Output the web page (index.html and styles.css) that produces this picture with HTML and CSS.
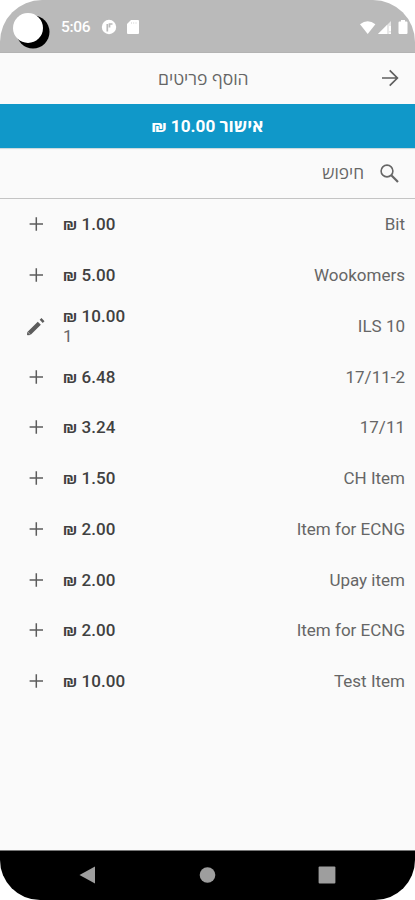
FILE: index.html
```html
<!DOCTYPE html>
<html lang="he">
<head>
<meta charset="utf-8">
<title>הוסף פריטים</title>
<link rel="stylesheet" href="styles.css">
</head>
<body>
<div class="phone">
  <header class="status">
    <svg class="camera" viewBox="0 0 38 38"><circle cx="21" cy="20" r="16.5" fill="#000"/><circle cx="16" cy="16" r="15" fill="#fff"/></svg>
    <span class="clock">5:06</span>
    <svg class="app-dot" viewBox="0 0 16 16"><circle cx="8" cy="8" r="7.2" fill="#fff"/><path d="M6.300 12.500V5M8.500 8.500V5h3" fill="none" stroke="#bababa" stroke-width="1.700"/></svg>
    <svg class="card" viewBox="0 0 12 14"><path d="M4 0h7q1 0 1 1v12q0 1-1 1H1q-1 0-1-1V4z" fill="#fff"/><path d="M4.500 2v2M6.700 2v2M9 2v2" stroke="#e6e6e6"/></svg>
    <svg class="signals" viewBox="0 0 48 16"><path d="M0 4.200Q7.700-1.800 15.400 4.200L7.700 14z" fill="#fff"/><path d="M31 1v13H18z" fill="#fff" fill-opacity=".65"/><path d="M27 5v9h-9zM29 6h2v5h-2zM29 12.500h2V14h-2z" fill="#fff"/><path d="M41 0h4v1.500h1.500q1 0 1 1V13q0 1-1 1h-7q-1 0-1-1V2.500q0-1 1-1H41z" fill="#fff"/></svg>
  </header>
  <nav class="toolbar">
    <span class="title" dir="rtl">הוסף פריטים</span>
    <svg class="arrow" viewBox="0 0 18 18"><path d="M1 9h15M8.700 1.300L16.400 9l-7.700 7.700" fill="none" stroke="#5f5f5f" stroke-width="1.700"/></svg>
  </nav>
  <div class="confirm" dir="rtl">אישור 10.00 ₪</div>
  <div class="search">
    <span class="hint" dir="rtl">חיפוש</span>
    <svg class="lens" viewBox="0 0 19 19"><circle cx="7" cy="7" r="5.900" fill="none" stroke="#666" stroke-width="1.600"/><path d="M11.300 11.300L18 18" stroke="#666" stroke-width="2.200"/></svg>
  </div>
  <svg class="defs"><symbol id="plus" viewBox="0 0 24 24"><path d="M12.300 5.300v13.400M5.600 12h13.400" stroke="#5c5c5c" stroke-width="1.500"/></symbol><symbol id="pencil" viewBox="0 0 24 24"><path d="M5.200 19.200L15.300 9.300M17.200 7.400L19 5.700" fill="none" stroke="#5c5c5c" stroke-width="4.400"/><path d="M3.300 17.800l3.200 3.200-2.700.3q-.8 0-.8-.8z" fill="#5c5c5c"/></symbol></svg>
  <main class="items">
    <div class="row"><svg class="icon"><use href="#plus"/></svg><div class="price"><b><i>₪</i> 1.00</b></div><span class="name">Bit</span></div>
    <div class="row"><svg class="icon"><use href="#plus"/></svg><div class="price"><b><i>₪</i> 5.00</b></div><span class="name">Wookomers</span></div>
    <div class="row"><svg class="icon"><use href="#pencil"/></svg><div class="price"><b><i>₪</i> 10.00</b><small>1</small></div><span class="name">ILS 10</span></div>
    <div class="row"><svg class="icon"><use href="#plus"/></svg><div class="price"><b><i>₪</i> 6.48</b></div><span class="name">17/11-2</span></div>
    <div class="row"><svg class="icon"><use href="#plus"/></svg><div class="price"><b><i>₪</i> 3.24</b></div><span class="name">17/11</span></div>
    <div class="row"><svg class="icon"><use href="#plus"/></svg><div class="price"><b><i>₪</i> 1.50</b></div><span class="name">CH Item</span></div>
    <div class="row"><svg class="icon"><use href="#plus"/></svg><div class="price"><b><i>₪</i> 2.00</b></div><span class="name">Item for ECNG</span></div>
    <div class="row"><svg class="icon"><use href="#plus"/></svg><div class="price"><b><i>₪</i> 2.00</b></div><span class="name">Upay item</span></div>
    <div class="row"><svg class="icon"><use href="#plus"/></svg><div class="price"><b><i>₪</i> 2.00</b></div><span class="name">Item for ECNG</span></div>
    <div class="row"><svg class="icon"><use href="#plus"/></svg><div class="price"><b><i>₪</i> 10.00</b></div><span class="name">Test Item</span></div>
  </main>
  <footer class="navbar">
    <svg viewBox="0 0 18 18"><path d="M1.500 9L17 .4v17.200z" fill="#9e9e9e"/></svg>
    <svg viewBox="0 0 18 18"><circle cx="9.500" cy="9" r="7.800" fill="#9e9e9e"/></svg>
    <svg viewBox="0 0 18 18"><rect x=".6" y=".6" width="16.800" height="16.800" rx="1" fill="#9e9e9e"/></svg>
  </footer>
</div>
</body>
</html>
```
FILE: styles.css
```css
* { box-sizing: border-box; }
body { margin: 0; background: #fff; font-family: Roboto, "Open Sans", sans-serif; color: #666; }
svg { display: block; flex: none; }
.defs { display: none; }
.phone { width: 415px; height: 900px; display: flex; flex-direction: column; overflow: hidden; }
.status { height: 53px; flex: none; background: #bababa; border-radius: 42px 42px 0 0; border-bottom: 1px solid #b3b3b3; display: flex; align-items: flex-start; padding: 12px 7px 0 12px; color: #fff; }
.camera { width: 38px; height: 38px; }
.clock { margin-left: 11px; font-size: 15.500px; font-weight: 500; line-height: 30px; width: 31px; letter-spacing: -.3px; }
.app-dot { width: 16px; height: 16px; margin: 7px 0 0 9px; }
.card { width: 12px; height: 14px; margin: 8px 0 0 10px; }
.signals { width: 48px; height: 16px; margin: 8px 0 0 auto; }
.toolbar { height: 51px; flex: none; background: #fafafa; display: flex; align-items: center; padding: 0 16px 1px 158px; justify-content: space-between; }
.title { font-family: "Open Sans", sans-serif; font-size: 17.500px; line-height: 24px; white-space: nowrap; }
.arrow { width: 18px; height: 18px; }
.confirm { height: 44px; flex: none; background: #1098c9; color: #fff; font: 700 17.200px/45px Roboto, "Open Sans", sans-serif; text-align: center; }
.search { height: 51px; flex: none; background: #fafafa; border-bottom: 1px solid #c4c4c4; box-shadow: inset 0 2px 1px -1px #c5d5da; display: flex; align-items: center; justify-content: flex-end; gap: 16px; padding-right: 16px; }
.hint { font-family: "Open Sans", sans-serif; font-size: 17.200px; line-height: 24px; }
.lens { width: 19px; height: 19px; }
.items { flex: 1; background: #fafafa; }
.row { height: 50.750px; display: flex; align-items: center; padding: 0 10px 0 24px; font-size: 17px; }
.icon { width: 24px; height: 24px; }
.price { margin-left: 15px; display: flex; flex-direction: column; line-height: 20px; }
.price b { font-weight: 500; color: #404040; letter-spacing: .1px; white-space: nowrap; }
.price i { font-style: normal; }
.price small { font-size: 17px; }
.name { margin-left: auto; }
.navbar { height: 50px; flex: none; background: #000; border-top: 1px solid #777; border-radius: 0 0 40px 40px; display: flex; align-items: center; justify-content: space-between; padding: 0 79px 1px 78px; }
.navbar svg { width: 18px; height: 18px; }
```
